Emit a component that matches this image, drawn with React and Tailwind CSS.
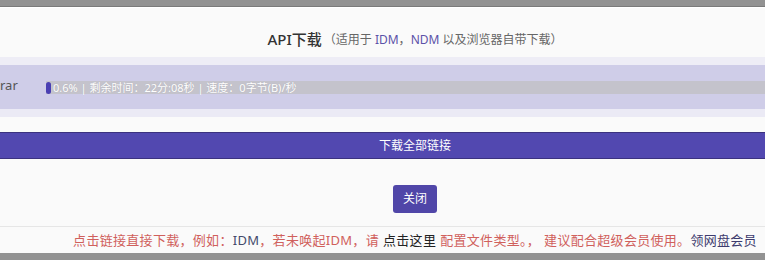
import React from "react";

const font = { fontFamily: '"Noto Sans", "Noto Sans CJK SC", sans-serif' };

function ProgressRow() {
  return (
    <div className="flex h-[44px] bg-[#cfcde8]">
      <div className="mt-[11px] w-[15px] whitespace-nowrap text-[13px] leading-[18px] text-[#555]">
        rar
      </div>
      <div className="ml-[31px] mt-[16px] flex h-[13px] flex-1 items-center bg-[#c4c3cc]">
        <div className="h-[12px] w-[5px] rounded-full bg-[#4a3fb3]" />
        <span className="ml-[2px] whitespace-nowrap text-[11px] leading-[13px] text-white [text-shadow:0_0_1px_rgba(0,0,0,0.15)]">
          0.6% | 剩余时间：22分:08秒 | 速度：0字节(B)/秒
        </span>
      </div>
    </div>
  );
}

export default function App() {
  return (
    <div
      className="flex h-[260px] w-[765px] flex-col overflow-hidden bg-[#929292]"
      style={font}
    >
      <div className="h-[7px] shrink-0 border-b border-[#7a7a7a]" />
      <div className="flex w-[830px] flex-1 flex-col border-t border-white bg-[#fafafa]">
        <div className="flex h-[49px] items-start justify-center pt-[21px]">
          <span className="text-[15px] font-medium leading-[20px] text-[#333]">
            API下载
          </span>
          <span className="ml-[2px] mt-[2px] text-[12px] leading-[18px] text-[#666]">
            （适用于 <span className="text-[#5b52a8]">IDM</span>，
            <span className="text-[#5b52a8]">NDM</span> 以及浏览器自带下载）
          </span>
        </div>
        <div className="h-[8px] bg-[#eeedf6]" />
        <ProgressRow />
        <div className="h-[8px] bg-[#ebeaf5]" />
        <div className="h-[15px]" />
        <button className="flex h-[27px] items-center justify-center border-y border-[#3b327f] bg-[#5248b0] text-[12px] text-white">
          下载全部链接
        </button>
        <div className="flex justify-center pt-[26px]">
          <button className="h-[28px] w-[44px] rounded-[3px] bg-[#5046a8] text-[12px] text-white">
            关闭
          </button>
        </div>
        <div className="mt-[13px] border-t border-[#e6e6e6]" />
        <div className="flex flex-1 items-center justify-center whitespace-nowrap pt-[2px] text-[13px] tracking-[0.3px] text-[#d0605c]">
          <span>
            点击链接直接下载，例如：<span className="text-[#444a6b]">IDM</span>
            ，若未唤起IDM，请
          </span>
          <span className="ml-[4px] text-[#222]">点击这里</span>
          <span className="ml-[4px]">配置文件类型。，</span>
          <span className="ml-[4px]">建议配合超级会员使用。</span>
          <span className="text-[#3d3b6e]">领网盘会员</span>
        </div>
      </div>
      <div className="h-[7px] shrink-0" />
    </div>
  );
}
